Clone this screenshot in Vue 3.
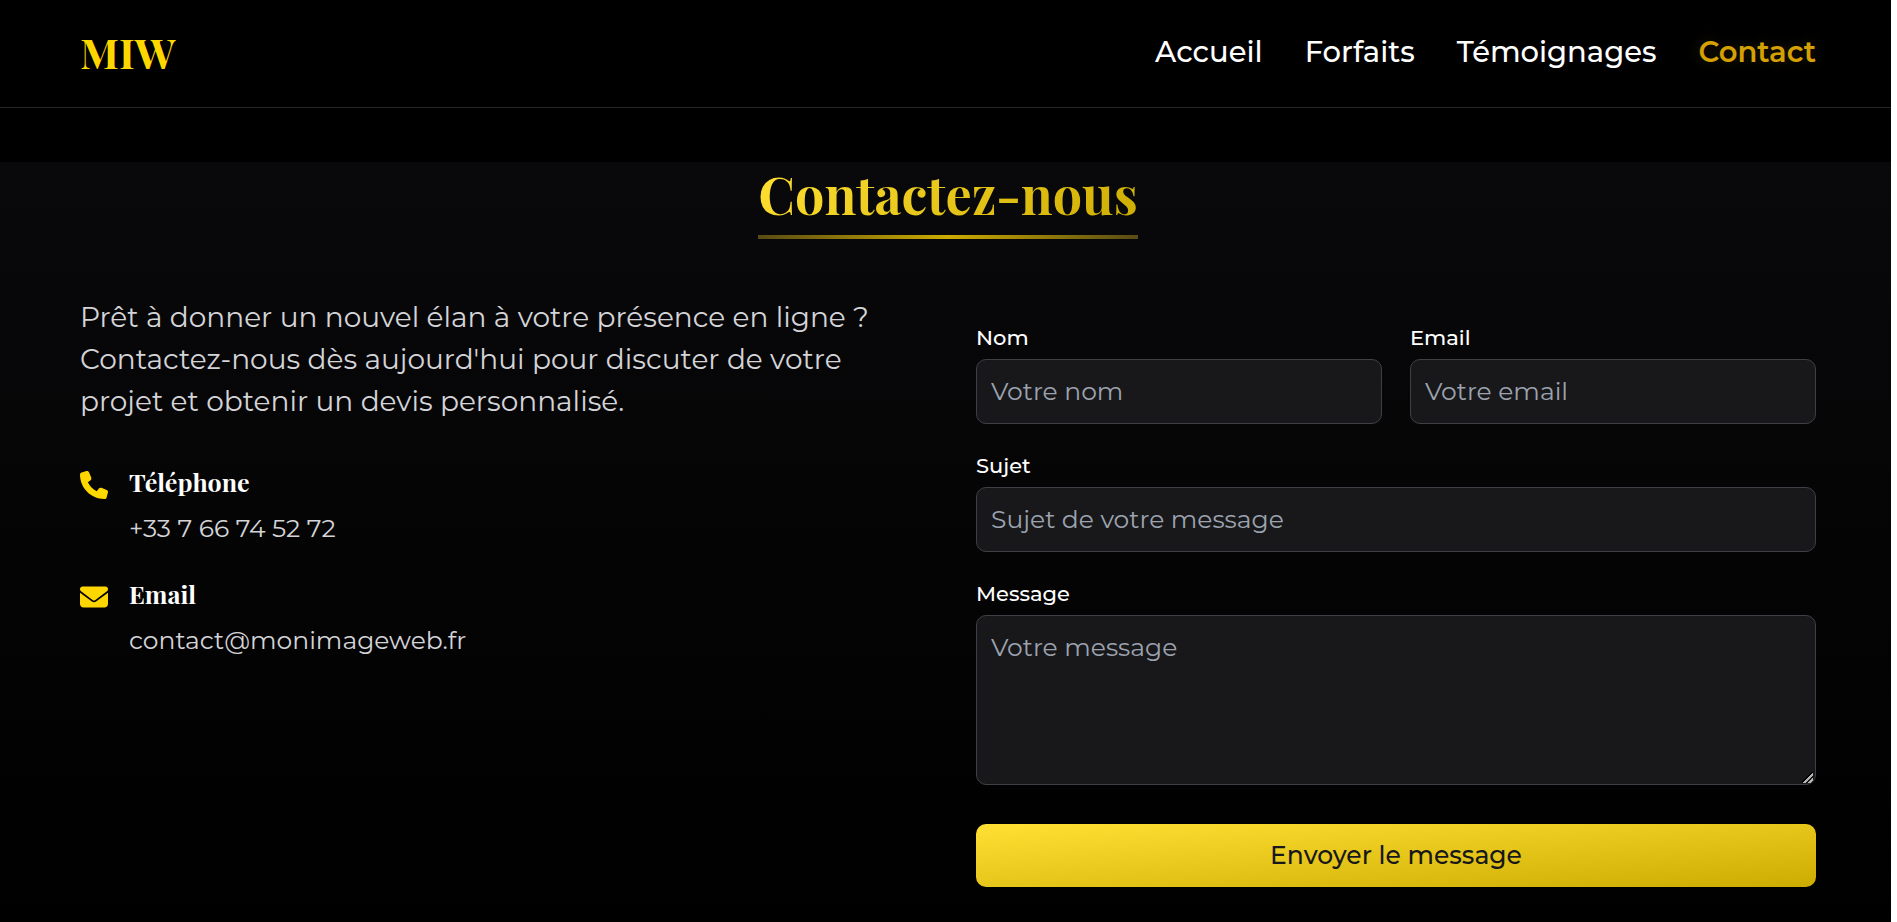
<script setup>
import { ref } from 'vue'

const links = ['Accueil', 'Forfaits', 'Témoignages', 'Contact']
const active = 'Contact'

const nom = ref('')
const email = ref('')
const sujet = ref('')
const message = ref('')
</script>

<template>
  <div class="page">
    <header class="topbar">
      <a class="logo" href="#">MIW</a>
      <nav class="nav">
        <a
          v-for="link in links"
          :key="link"
          href="#"
          :class="{ active: link === active }"
        >{{ link }}</a>
      </nav>
    </header>

    <main class="contact">
      <h1 class="title"><span class="title-text">Contactez-nous</span></h1>

      <div class="columns">
        <section class="info">
          <p class="intro">
            Prêt à donner un nouvel élan à votre présence en ligne ?
            Contactez-nous dès aujourd'hui pour discuter de votre projet et
            obtenir un devis personnalisé.
          </p>
          <div class="item">
            <svg class="icon" viewBox="0 0 512 512" aria-hidden="true">
              <path d="M164.900 24.600c-7.700-18.600-28-28.500-47.400-23.200l-88 24C12.100 30.200 0 46 0 64C0 311.400 200.600 512 448 512c18 0 33.800-12.100 38.600-29.500l24-88c5.300-19.400-4.600-39.700-23.200-47.400l-96-40c-16.300-6.800-35.200-2.100-46.300 11.600L304.700 368C234.300 334.700 177.300 277.700 144 207.300L193.300 167c13.700-11.200 18.400-30 11.600-46.300l-40-96z" />
            </svg>
            <div>
              <h2 class="item-title">Téléphone</h2>
              <p class="item-text">+33 7 66 74 52 72</p>
            </div>
          </div>
          <div class="item">
            <svg class="icon" viewBox="0 0 512 512" aria-hidden="true">
              <path d="M48 64C21.500 64 0 85.500 0 112c0 15.100 7.100 29.300 19.200 38.400L236.800 313.600c11.400 8.500 27 8.500 38.400 0L492.800 150.400c12.100-9.100 19.200-23.300 19.200-38.400c0-26.500-21.500-48-48-48H48zM0 176V384c0 35.300 28.700 64 64 64H448c35.300 0 64-28.700 64-64V176L294.400 339.200c-22.800 17.100-54 17.100-76.800 0L0 176z" />
            </svg>
            <div>
              <h2 class="item-title">Email</h2>
              <p class="item-text">contact@monimageweb.fr</p>
            </div>
          </div>
        </section>

        <form class="form" @submit.prevent>
          <div class="row">
            <div class="field">
              <label class="label" for="nom">Nom</label>
              <input id="nom" v-model="nom" class="control" type="text" placeholder="Votre nom" />
            </div>
            <div class="field">
              <label class="label" for="email">Email</label>
              <input id="email" v-model="email" class="control" type="email" placeholder="Votre email" />
            </div>
          </div>
          <div class="field">
            <label class="label" for="sujet">Sujet</label>
            <input id="sujet" v-model="sujet" class="control" type="text" placeholder="Sujet de votre message" />
          </div>
          <div class="field">
            <label class="label" for="message">Message</label>
            <textarea id="message" v-model="message" class="control area" placeholder="Votre message"></textarea>
          </div>
          <button class="submit" type="submit">Envoyer le message</button>
        </form>
      </div>
    </main>
  </div>
</template>

<style>
body {
  background: #fff;
}
</style>

<style scoped>
.page {
  display: flex;
  flex-direction: column;
  box-sizing: border-box;
  min-height: 100vh;
  margin-right: 6px;
  background: #000;
  color: #fff;
  font-family: Montserrat, Inter, sans-serif;
}

.page * {
  box-sizing: border-box;
  margin: 0;
}

.topbar {
  display: flex;
  align-items: center;
  justify-content: space-between;
  height: 108px;
  padding: 0 75px 4px 80px;
  border-bottom: 1px solid #262626;
}

.logo,
.title,
.item-title {
  font-family: "Playfair Display", "Liberation Serif", serif;
  font-weight: 700;
}

.logo {
  color: #ffd700;
  font-size: 42px;
  line-height: 56px;
  text-decoration: none;
}

.nav {
  display: flex;
  gap: 42px;
}

.nav a {
  color: #fff;
  font-size: 29px;
  font-weight: 500;
  line-height: 42px;
  text-decoration: none;
}

.nav .active {
  color: #d4a003;
  font-weight: 600;
  text-shadow: 0 0 14px rgba(255, 215, 0, 0.15);
}

.contact {
  flex: 1;
  margin-top: 54px;
  padding: 0 75px 35px 80px;
  background: linear-gradient(to bottom, #09090b, #000);
}

.title {
  display: flex;
  justify-content: center;
  font-size: 52px;
  line-height: 63px;
}

.title-text {
  padding-bottom: 10px;
  border-bottom: 4px solid;
  border-image: linear-gradient(to right, #584a14, #ccac00, #584a14) 1;
  background: linear-gradient(135deg, #ffe033, #ccac00) text;
  color: transparent;
}

.columns {
  display: grid;
  grid-template-columns: 1fr 1fr;
  gap: 56px;
  margin-top: 57px;
}

.intro {
  margin-bottom: 42px;
  color: #d4d4d8;
  font-size: 28px;
  line-height: 42px;
}

.item {
  display: flex;
  gap: 21px;
  margin-bottom: 29px;
}

.icon {
  flex: none;
  width: 28px;
  height: 28px;
  margin-top: 7px;
  fill: #ffd700;
}

.item-title {
  margin-bottom: 10px;
  font-size: 25px;
  line-height: 36px;
}

.item-text {
  color: #d4d4d8;
  font-size: 25px;
  line-height: 37px;
}

.form {
  display: flex;
  flex-direction: column;
  gap: 28px;
  padding-top: 28px;
}

.row {
  display: grid;
  grid-template-columns: 1fr 1fr;
  gap: 28px;
}

.field {
  display: flex;
  flex-direction: column;
}

.label {
  margin-bottom: 7px;
  font-size: 21px;
  font-weight: 500;
  line-height: 28px;
}

.control {
  width: 100%;
  height: 65px;
  padding: 0 14px 2px;
  border: 1px solid #3f3f46;
  border-radius: 10px;
  background: #18181b;
  color: #fff;
  font-family: inherit;
  font-size: 25px;
  line-height: 37px;
}

.area {
  display: block;
  height: 170px;
  padding: 13px 14px;
  resize: vertical;
}

.area::-webkit-resizer {
  background: linear-gradient(
      135deg,
      transparent 7px,
      #000 7px 8px,
      #b4b4b4 8px 10px,
      transparent 10px 12px,
      #b4b4b4 12px 14px,
      transparent 14px
    )
    2px 3px / 11px 11px no-repeat;
}

.control::placeholder {
  color: #9ca3af;
  opacity: 1;
}

.submit {
  height: 63px;
  margin-top: 11px;
  padding: 0 14px 2px;
  border: 0;
  border-radius: 10px;
  background: linear-gradient(to bottom right, #ffe033, #ccac00);
  color: #18181b;
  font-family: inherit;
  font-size: 25px;
  font-weight: 500;
}
</style>
